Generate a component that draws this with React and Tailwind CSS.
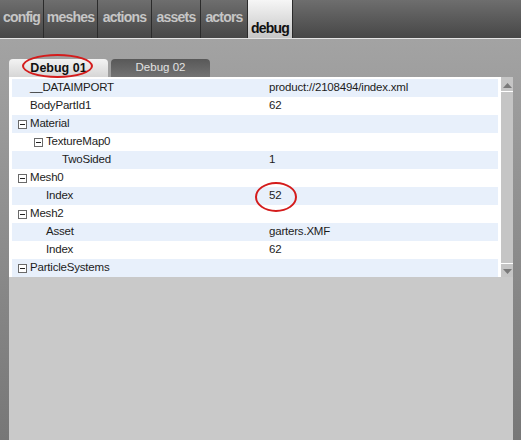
const topTabs = [
  { label: 'config', w: 'w-[44px]' },
  { label: 'meshes', w: 'w-[54px]' },
  { label: 'actions', w: 'w-[54px]' },
  { label: 'assets', w: 'w-[49px]' },
  { label: 'actors', w: 'w-[47px]' },
]

const rows = [
  { label: '__DATAIMPORT', value: 'product://2108494/index.xml', depth: 0 },
  { label: 'BodyPartId1', value: '62', depth: 0 },
  { label: 'Material', depth: 0, open: true },
  { label: 'TextureMap0', depth: 1, open: true },
  { label: 'TwoSided', value: '1', depth: 2 },
  { label: 'Mesh0', depth: 0, open: true },
  { label: 'Index', value: '52', depth: 1 },
  { label: 'Mesh2', depth: 0, open: true },
  { label: 'Asset', value: 'garters.XMF', depth: 1 },
  { label: 'Index', value: '62', depth: 1 },
  { label: 'ParticleSystems', depth: 0, open: true },
]

const indent = ['pl-[6px]', 'pl-[22px]', 'pl-[38px]']

function MinusBox() {
  return (
    <span className="w-[9px] h-[9px] border border-[#6a6a6a] bg-white flex items-center justify-center">
      <span className="w-[5px] h-px bg-[#222]" />
    </span>
  )
}

function TreeRow({ row, index }) {
  const band = index % 2 === 0 ? 'bg-[#e8f0fb]' : 'bg-white'
  return (
    <div className={`h-[18px] flex items-center text-[11.5px] tracking-[-0.2px] text-[#1c1c1c] ${band}`}>
      <div className={`w-[257px] flex items-center ${indent[row.depth]}`}>
        <span className="w-[12px] flex items-center">{row.open && <MinusBox />}</span>
        <span>{row.label}</span>
      </div>
      <div>{row.value ?? ''}</div>
    </div>
  )
}

function Scrollbar() {
  return (
    <div className="w-[12px] self-stretch bg-[#c5c5c5] flex flex-col justify-between">
      <div className="h-[15px] border-b border-white flex items-start justify-center pt-[6px]">
        <svg width="9" height="5" viewBox="0 0 9 5"><path d="M0 5 L4.5 0 L9 5 Z" fill="#7a7a7a" /></svg>
      </div>
      <div className="h-[14px] border-t border-white flex items-start justify-center pt-[5px]">
        <svg width="9" height="5" viewBox="0 0 9 5"><path d="M0 0 L4.5 5 L9 0 Z" fill="#7a7a7a" /></svg>
      </div>
    </div>
  )
}

export default function App() {
  return (
    <div className="relative w-[521px] h-[440px] overflow-hidden flex flex-col" style={{ fontFamily: '"Liberation Sans", Arial, sans-serif' }}>
      <div className="h-[39px] shrink-0 flex bg-gradient-to-b from-[#6e6e6e] to-[#474747] border-b border-[#e4e4e4]">
        {topTabs.map(t => (
          <div key={t.label} className={`${t.w} h-full border-r border-[#2b2b2b] flex justify-center pt-[7px] text-[14px] font-bold tracking-[-0.8px] text-[#c6c6c6]`}>
            {t.label}
          </div>
        ))}
        <div className="w-[45px] h-full border-r border-[#2b2b2b] bg-gradient-to-b from-[#f6f6f6] to-[#c6c6c6] flex justify-center pt-[18px] text-[14px] font-bold tracking-[-0.8px] text-[#111]">
          debug
        </div>
      </div>

      <div className="flex-1 flex flex-col pl-[9px] pr-[8px] pt-[20px] bg-gradient-to-b from-[#a3a3a3] to-[#777777]">
        <div className="flex gap-[3px] h-[18px] shrink-0">
          <div className="w-[99px] rounded-t-[4px] bg-gradient-to-b from-[#f3f3f3] to-[#d6d6d6] flex items-center justify-center text-[12.5px] font-bold text-[#111]">
            Debug 01
          </div>
          <div className="w-[99px] rounded-t-[4px] bg-gradient-to-b from-[#585858] to-[#737373] flex items-center justify-center text-[11.5px] text-[#e2e2e2]">
            Debug 02
          </div>
        </div>

        <div className="flex-1 bg-[#c9c9c9]">
          <div className="flex bg-white h-[200px]">
            <div className="w-[492px] pl-[3px] pr-[3px] pt-[2px]">
              {rows.map((row, i) => (
                <TreeRow key={i} row={row} index={i} />
              ))}
            </div>
            <Scrollbar />
          </div>
        </div>
      </div>

      <div className="absolute left-[22px] top-[54px] w-[71px] h-[24px] rounded-[50%] border-2 border-[#d41c1c]" />
      <div className="absolute left-[255px] top-[182px] w-[42px] h-[30px] rounded-[50%] border-2 border-[#d41c1c]" />
    </div>
  )
}
